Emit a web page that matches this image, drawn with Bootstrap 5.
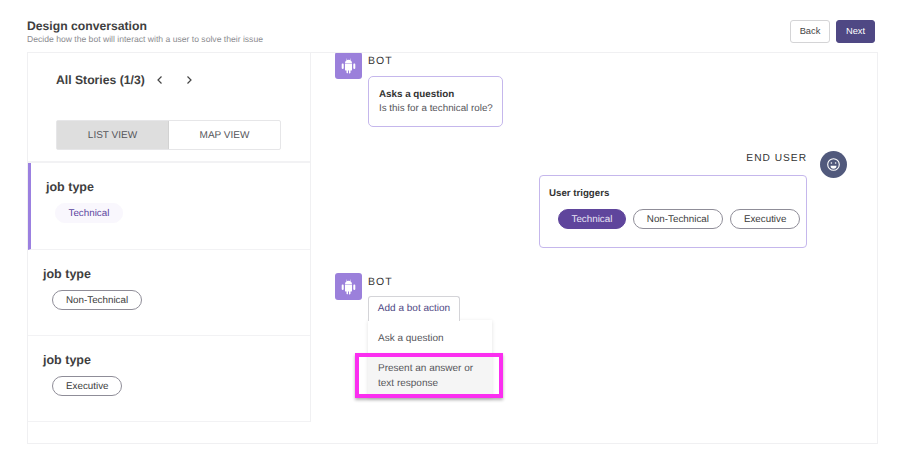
<!DOCTYPE html>
<html lang="en">
<head>
<meta charset="utf-8">
<title>Design conversation</title>
<link href="https://cdn.jsdelivr.net/npm/bootstrap@5.3.0/dist/css/bootstrap.min.css" rel="stylesheet">
<style>
html,body{height:449px;overflow:hidden;background:#fff;}
body{font-family:"Liberation Sans",Arial,sans-serif;color:#3d3d3d;text-rendering:geometricPrecision;}
.page-head{padding:19px 35px 0 27px;height:52px;}
.page-title{font-size:12.2px;font-weight:700;line-height:15px;color:#3f3f3f;margin:0;}
.page-sub{font-size:8.6px;line-height:12px;color:#8b8b8f;margin-top:-1px;}
.head-btn{width:40px;height:23px;padding:0;font-size:9.3px;line-height:21px;border-radius:3px;margin-top:1px;}
.btn-back{background:#fff;border:1px solid #d4d4d6;color:#444;}
.btn-next{width:39px;background:#4f4884;border:1px solid #4f4884;color:#fff;}
.head-gap{gap:6px;}
.panel-main{margin:0 32px 0 27px;height:392px;border:1px solid #f0f0f2;overflow:hidden;}
.side-col{width:283px;flex:none;border-right:1px solid #f0f0f2;align-self:flex-start;}
.side-top{height:110px;padding:14px 28px 0 28px;border-bottom:2px solid #f2f2f4;}
.stories{font-size:12.2px;font-weight:700;line-height:26px;color:#3f3f3f;}
.chev{width:9px;height:10px;margin-left:10px;}
.chev-next{margin-left:21px;}
.view-switch{margin-top:27px;width:225px;height:30px;border:1px solid #e6e6e8;border-radius:2px;}
.view-item{flex:1 1 0;font-size:10px;line-height:29px;text-align:center;color:#55555a;}
.view-on{background:#dedede;border-right:1px solid #d2d2d2;}
.story-item{height:86px;padding:17px 15px 0;border-bottom:1px solid #f2f2f4;}
.story-on{height:87px;padding-left:15px;border-left:3px solid #9b80e0;}
.story-title{font-size:12.5px;font-weight:700;line-height:15px;color:#3f3f3f;}
.tag-row{margin:5px 0 0 9px;}
.tag{display:inline-block;height:20px;line-height:19px;padding:0 13px;font-size:9.8px;border-radius:10px;border:1px solid #8f8d98;color:#3c3c3c;background:#fff;white-space:nowrap;}
.tag-soft{padding:0 12.5px;border-color:#f9f7fd;background:#f9f7fd;color:#5b45a0;}
.tag-fill{padding:0 12.5px;border-color:#5f459c;background:#5f459c;color:#e9e4f6;}
.conv-col{flex:1 1 auto;min-width:0;padding:0 70px 0 24px;position:relative;}
.avatar-bot{width:27px;height:27px;border-radius:3px;background:#9b80db;flex:none;}
.who{font-size:10.5px;letter-spacing:1px;line-height:12px;color:#333;}
.bot-top{margin-top:-1px;}
.bot-body{margin-left:6px;}
.who-bot{padding-top:3px;}
.bubble{margin-top:9px;width:135px;height:51px;border:1px solid #c5b7ec;border-radius:5px;padding:11px 10px 0;white-space:nowrap;}
.bubble-title{font-size:9.8px;font-weight:700;line-height:13px;color:#333;}
.bubble-text{font-size:9.8px;line-height:15px;color:#55555a;}
.user-block{margin-top:24px;}
.avatar-user{width:27px;height:27px;border-radius:50%;background:#51597c;flex:none;margin:0 -39.5px 0 12.5px;}
.who-user{padding-top:2px;font-size:10.2px;}
.trigger-box{margin-top:-3px;width:268px;height:73px;border:1px solid #c5b7ec;border-radius:4px;padding:11px 9px 0;}
.trigger-title{font-size:9.7px;font-weight:700;line-height:13px;color:#333;}
.trigger-tags{margin:9px 0 0 9px;gap:7px;}
.bot-second{margin-top:25px;position:relative;}
.action-btn{margin-top:8px;width:92px;height:25px;background:#fff;border:1px solid #d4d4d8;border-bottom:0;border-radius:3px 3px 0 0;font-size:10px;line-height:24px;text-align:center;color:#4f4884;position:relative;z-index:2;}
.action-menu{width:124px;box-shadow:0 1px 4px rgba(0,0,0,.12);background:#fff;margin-top:-1px;}
.action-item{font-size:10px;line-height:15px;padding:11px 10px 7px;color:#55555a;}
.action-hover{background:#f5f5f5;padding:8px 10px 6px;}
.mark-box{position:absolute;left:20px;top:80px;width:148px;height:45px;border:4px solid #fb2ef0;box-shadow:0 2px 3px rgba(0,0,0,.3);z-index:3;}
</style>
</head>
<body>
<div class="page-head d-flex justify-content-between align-items-start">
  <div>
    <h1 class="page-title">Design conversation</h1>
    <div class="page-sub">Decide how the bot will interact with a user to solve their issue</div>
  </div>
  <div class="d-flex head-gap">
    <button type="button" class="btn head-btn btn-back">Back</button>
    <button type="button" class="btn head-btn btn-next">Next</button>
  </div>
</div>
<div class="panel-main d-flex">
  <div class="side-col">
    <div class="side-top">
      <div class="d-flex align-items-center">
        <span class="stories">All Stories (1/3)</span>
        <svg class="chev" viewBox="0 0 9 10" fill="none" stroke="#444" stroke-width="1.2"><path d="M6.5 1.5 3 5l3.5 3.5"/></svg>
        <svg class="chev chev-next" viewBox="0 0 9 10" fill="none" stroke="#444" stroke-width="1.2"><path d="M2.5 1.5 6 5 2.5 8.5"/></svg>
      </div>
      <div class="view-switch d-flex">
        <div class="view-item view-on">LIST VIEW</div>
        <div class="view-item">MAP VIEW</div>
      </div>
    </div>
    <div class="story-item story-on">
      <div class="story-title">job type</div>
      <div class="tag-row"><span class="tag tag-soft">Technical</span></div>
    </div>
    <div class="story-item">
      <div class="story-title">job type</div>
      <div class="tag-row"><span class="tag">Non-Technical</span></div>
    </div>
    <div class="story-item">
      <div class="story-title">job type</div>
      <div class="tag-row"><span class="tag">Executive</span></div>
    </div>
  </div>
  <div class="conv-col">
    <div class="d-flex bot-top">
      <div class="avatar-bot d-flex align-items-center justify-content-center">
        <svg width="15" height="16" viewBox="0 0 15 16" fill="#fff"><path d="M4 5.6h7v6.1a.9.9 0 0 1-.9.9H9.500v2a.9.900 0 0 1-1.500.600V12.600H7v2.400a.9.900 0 0 1-1.500-.600v-1.800h-.600a.9.900 0 0 1-.900-.900zM1.700 5.600a.9.900 0 0 1 1 .900v3.600a1 1 0 0 1-2 0V6.500a.9.900 0 0 1 1-.900zM13.300 5.600a.9.900 0 0 1 1 .900v3.600a1 1 0 0 1-2 0V6.500a.9.900 0 0 1 1-.900zM4 5a3.500 3.500 0 0 1 1.800-2.900L5.100.800l.4-.2.700 1.300a3.700 3.700 0 0 1 2.600 0l.7-1.300.4.2-.7 1.300A3.500 3.500 0 0 1 11 5z"/></svg>
      </div>
      <div class="bot-body">
        <div class="who who-bot">BOT</div>
        <div class="bubble">
          <div class="bubble-title">Asks a question</div>
          <div class="bubble-text">Is this for a technical role?</div>
        </div>
      </div>
    </div>
    <div class="user-block d-flex flex-column align-items-end">
      <div class="d-flex align-items-start">
        <div class="who who-user">END USER</div>
        <div class="avatar-user d-flex align-items-center justify-content-center">
          <svg width="15" height="15" viewBox="0 0 15 15" fill="none" stroke="#fff" stroke-width="1.100"><circle cx="7.500" cy="7.500" r="5.800"/><circle cx="5.400" cy="6" r=".8" fill="#fff" stroke="none"/><circle cx="9.600" cy="6" r=".8" fill="#fff" stroke="none"/><path d="M4.500 8.800h6a3 3 0 0 1-6 0z" fill="#fff" stroke="none"/></svg>
        </div>
      </div>
      <div class="trigger-box">
        <div class="trigger-title">User triggers</div>
        <div class="trigger-tags d-flex">
          <span class="tag tag-fill">Technical</span>
          <span class="tag">Non-Technical</span>
          <span class="tag">Executive</span>
        </div>
      </div>
    </div>
    <div class="bot-second d-flex">
      <div class="avatar-bot d-flex align-items-center justify-content-center">
        <svg width="15" height="16" viewBox="0 0 15 16" fill="#fff"><path d="M4 5.6h7v6.1a.9.9 0 0 1-.9.9H9.500v2a.9.900 0 0 1-1.500.600V12.600H7v2.400a.9.900 0 0 1-1.500-.600v-1.800h-.600a.9.900 0 0 1-.900-.900zM1.700 5.600a.9.900 0 0 1 1 .900v3.600a1 1 0 0 1-2 0V6.500a.9.900 0 0 1 1-.900zM13.300 5.600a.9.900 0 0 1 1 .900v3.600a1 1 0 0 1-2 0V6.500a.9.900 0 0 1 1-.900zM4 5a3.500 3.500 0 0 1 1.800-2.900L5.100.800l.4-.2.700 1.300a3.700 3.700 0 0 1 2.600 0l.7-1.300.4.2-.7 1.300A3.500 3.500 0 0 1 11 5z"/></svg>
      </div>
      <div class="bot-body">
        <div class="who who-bot">BOT</div>
        <div class="action-btn">Add a bot action</div>
        <div class="action-menu">
          <div class="action-item">Ask a question</div>
          <div class="action-item action-hover">Present an answer or text response</div>
        </div>
      </div>
      <div class="mark-box"></div>
    </div>
  </div>
</div>
<script src="https://cdn.jsdelivr.net/npm/bootstrap@5.3.0/dist/js/bootstrap.bundle.min.js"></script>
</body>
</html>
